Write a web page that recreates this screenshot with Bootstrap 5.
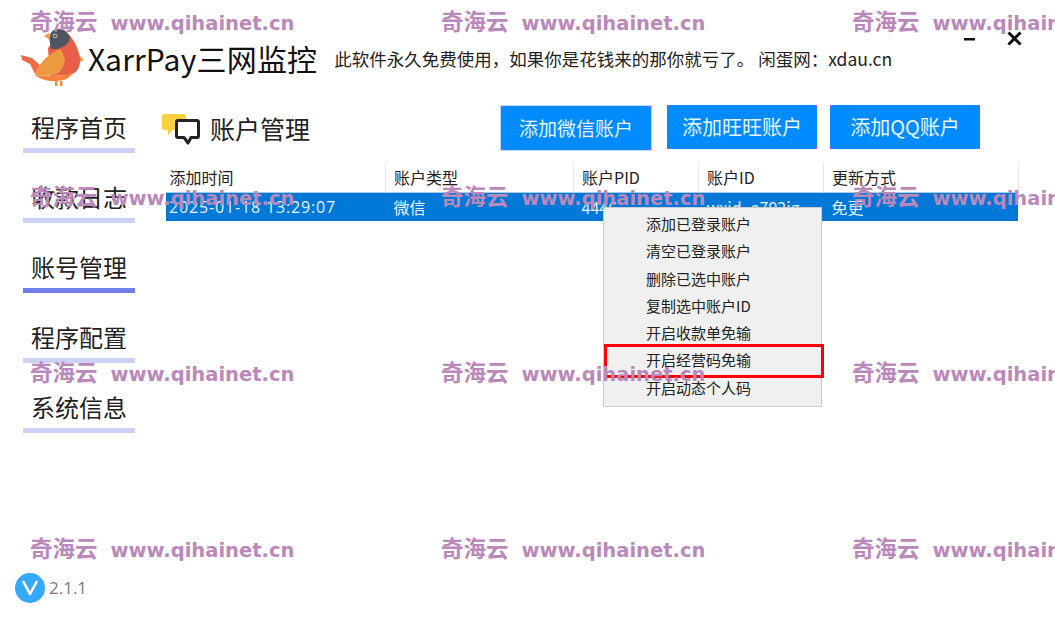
<!DOCTYPE html>
<html lang="zh-CN">
<head>
  <meta charset="UTF-8">
  <title>XarrPay三网监控</title>
  <meta name="viewport" content="width=device-width, initial-scale=1.0">
  <link href="https://cdn.jsdelivr.net/npm/bootstrap@5.3.0/dist/css/bootstrap.min.css" rel="stylesheet">
  <style>
    body {
      background-color: #fff;
      color: #222;
      font-family: "Noto Sans CJK SC", "Noto Sans", sans-serif;
      height: 630px;
      overflow: hidden;
    }
    .app-shell {
      height: 630px;
    }
    .app-head {
      height: 88px;
      padding-top: 28px;
      padding-left: 20px;
    }
    .app-title {
      font-size: 30px;
      line-height: 60px;
      letter-spacing: 0.2px;
      margin-left: 3px;
      color: #111;
    }
    .app-note {
      font-size: 17.5px;
      line-height: 62px;
      margin-left: 17px;
      color: #222;
    }
    .win-btns {
      position: absolute;
      top: 31px;
      right: 33px;
      gap: 31px;
    }
    .side-nav {
      width: 112px;
      margin-left: 23px;
      margin-top: 18px;
    }
    .side-item {
      display: block;
      height: 47px;
      margin-bottom: 23px;
      font-size: 24px;
      line-height: 42px;
      text-align: center;
      color: #222;
      text-decoration: none;
      border-bottom: 5px solid #ccd1f6;
    }
    .side-item.on {
      border-bottom-color: #6f7ee8;
    }
    .main-pane {
      width: 883px;
      margin-left: 30px;
    }
    .pane-head {
      height: 74px;
    }
    .pane-icon {
      margin-left: -3px;
      margin-top: 24px;
    }
    .pane-title {
      font-size: 25px;
      line-height: 46px;
      margin-left: 10px;
      margin-top: 17px;
    }
    .btn-bar {
      margin-right: 68px;
    }
    .add-btn {
      width: 150px;
      height: 44px;
      padding: 0;
      border: 0;
      border-radius: 0;
      font-size: 19px;
      color: #e8f4ff;
      background:
        radial-gradient(circle at 0 0, #ff2bd0 1.5px, transparent 2px),
        radial-gradient(circle at 100% 0, #ff2bd0 1.5px, transparent 2px),
        radial-gradient(circle at 0 100%, #ff2bd0 1.5px, transparent 2px),
        radial-gradient(circle at 100% 100%, #ff2bd0 1.5px, transparent 2px),
        #008cff;
    }
    .btn-low {
      margin-top: 18px;
      box-shadow: 0 0 0 1px #b5dbff;
    }
    .btn-up {
      margin-top: 17px;
      margin-left: 16px;
      font-size: 20px;
    }
    .btn-up.tight {
      margin-left: 13px;
    }
    .acct-table {
      width: 853px;
      table-layout: fixed;
      margin-bottom: 0;
      font-size: 16px;
    }
    .acct-table th, .acct-table td {
      padding: 0 0 0 8px;
      white-space: nowrap;
      overflow: hidden;
      font-weight: 400;
      border: 0;
    }
    .acct-table th {
      height: 30px;
      line-height: 29px;
      color: #222;
      border-right: 1px solid #e6e6e6;
    }
    .acct-table th:first-child {
      padding-left: 4px;
    }
    .acct-table td {
      height: 29px;
      line-height: 28px;
      --bs-table-bg: #0078d7;
      color: #e6f2fc;
      border-top: 1px solid #a8cdec;
    }
    .acct-table td:first-child {
      padding-left: 3px;
      border-left: 1px solid #fff;
    }
    .acct-table td:last-child {
      border-right: 1px solid #fff;
    }
    .date-cell {
      font-family: "Open Sans", "Noto Sans CJK SC", sans-serif;
      letter-spacing: 0.85px;
    }
    .ver-row {
      position: absolute;
      left: 15px;
      top: 573px;
    }
    .ver-badge {
      width: 30px;
      height: 30px;
      background-color: #35a9fb;
    }
    .ver-text {
      font-size: 17px;
      color: #7a7a7a;
      margin-left: 4px;
      font-family: "Open Sans", sans-serif;
    }
    .ctx-menu {
      position: absolute;
      left: 603px;
      top: 207px;
      width: 219px;
      height: 200px;
      padding: 2px 0 0;
      background-color: #f0f0f0;
      border: 1px solid #ccc;
      border-radius: 0;
      font-size: 15px;
      color: #222;
    }
    .ctx-item {
      height: 27.3px;
      line-height: 27px;
      padding-left: 42px;
    }
    .ctx-mark {
      position: absolute;
      left: 604px;
      top: 344px;
      width: 220px;
      height: 34px;
      border: 3px solid #f00;
    }
    .wm-layer {
      position: absolute;
      left: 0;
      top: 0;
      width: 1055px;
      height: 630px;
      pointer-events: none;
      overflow: hidden;
    }
    .wm-text {
      position: absolute;
      white-space: nowrap;
      color: #bb88bb;
      font-size: 22.5px;
      line-height: 24px;
      font-weight: 700;
    }
    .wm-text span {
      font-family: "DejaVu Sans", sans-serif;
      font-size: 19.5px;
      margin-left: 13px;
    }
  </style>
</head>
<body>
  <div class="app-shell position-relative">

    <!-- Header -->
    <div class="app-head d-flex align-items-start">
      <svg width="65" height="60" viewBox="0 0 65 60">
        <path d="M1 27 L12 30 L20 37 L15 46 L10 36 L2 32 Z" fill="#ee6a4a"/>
        <path d="M24 8 L29 5 L30 12 Z" fill="#f39a3e"/>
        <path d="M58 26 L64 32 L58 35 Z" fill="#ee9b3d"/>
        <path d="M43 1 C52 8 58 18 60 30 C61 40 56 45 50 47 L30 48 L28 20 Z" fill="#e75f49"/>
        <path d="M30 7 C31 3 35 1 39 1 C44 1 48 5 50 9 C50 13 48 15 46 17 C42 19 40 21 36 21 L31 21 C30 16 29 12 30 7 Z" fill="#4f5462"/>
        <path d="M15 47 C30 49 44 48 53 45 C50 50 44 53 35 53 C26 53 20 51 15 47 Z" fill="#f8823c"/>
        <path d="M15 47 C18 38 24 28 40 21 C44 26 46 32 44 36 C42 41 40 44 37 46 C30 48 22 48 15 47 Z" fill="#ec9a40"/>
        <path d="M35 53 h2.5 v5 h-2.5 Z M40 53 h2.5 v5 h-2.5 Z" fill="#f2883c"/>
        <circle cx="35" cy="8" r="2.4" fill="#a9a4a4"/>
        <circle cx="35" cy="8" r="1.1" fill="#444"/>
      </svg>
      <div class="app-title">XarrPay三网监控</div>
      <div class="app-note">此软件永久免费使用，如果你是花钱来的那你就亏了。 闲蛋网：xdau.cn</div>
    </div>
    <div class="win-btns d-flex align-items-center">
      <svg width="12" height="14" viewBox="0 0 12 14"><rect x="0" y="6" width="11" height="2.5" fill="#111"/></svg>
      <svg width="15" height="15" viewBox="0 0 15 15"><path d="M1.5 1.5 L13.5 13.5 M13.5 1.5 L1.5 13.5" stroke="#111" stroke-width="3"/></svg>
    </div>

    <div class="d-flex">
      <!-- Sidebar -->
      <nav class="side-nav flex-shrink-0">
        <a class="side-item" href="#">程序首页</a>
        <a class="side-item" href="#">收款日志</a>
        <a class="side-item on" href="#">账号管理</a>
        <a class="side-item" href="#">程序配置</a>
        <a class="side-item" href="#">系统信息</a>
      </nav>

      <!-- Main -->
      <main class="main-pane">
        <div class="pane-head d-flex align-items-start">
          <svg class="pane-icon" width="38" height="34" viewBox="0 0 38 34">
            <path d="M2 2 H22 Q24 2 24 4 V16 Q24 18 22 18 H11 L6 23 V18 H2 Q0 18 0 16 V4 Q0 2 2 2 Z" fill="#fdd13f"/>
            <path d="M16 8.5 H35 Q36.5 8.5 36.5 10 V24 Q36.5 25.5 35 25.5 H29 L26 31 L22 25.5 H16 Q14.5 25.5 14.5 24 V10 Q14.5 8.5 16 8.5 Z" fill="#fff" stroke="#222" stroke-width="3" stroke-linejoin="round"/>
          </svg>
          <div class="pane-title">账户管理</div>
          <div class="btn-bar d-flex ms-auto">
            <button class="btn add-btn btn-low" type="button">添加微信账户</button>
            <button class="btn add-btn btn-up" type="button">添加旺旺账户</button>
            <button class="btn add-btn btn-up tight" type="button">添加QQ账户</button>
          </div>
        </div>
        <table class="table acct-table">
          <colgroup>
            <col style="width:220px"><col style="width:188px"><col style="width:125px"><col style="width:125px"><col style="width:195px">
          </colgroup>
          <thead>
            <tr><th>添加时间</th><th>账户类型</th><th>账户PID</th><th>账户ID</th><th>更新方式</th></tr>
          </thead>
          <tbody>
            <tr><td class="date-cell">2025-01-18 13:29:07</td><td>微信</td><td>4446</td><td>wxid_a792ig</td><td>免更</td></tr>
          </tbody>
        </table>
      </main>
    </div>

    <!-- Version -->
    <div class="ver-row d-flex align-items-center">
      <div class="ver-badge rounded-circle d-flex align-items-center justify-content-center">
        <svg width="18" height="16" viewBox="0 0 18 16"><path d="M2.5 2 L9 14 L15.5 2" fill="none" stroke="#fff" stroke-width="2.6" stroke-linecap="round" stroke-linejoin="round"/></svg>
      </div>
      <div class="ver-text">2.1.1</div>
    </div>

    <!-- Context menu -->
    <div class="ctx-menu">
      <div class="ctx-item">添加已登录账户</div>
      <div class="ctx-item">清空已登录账户</div>
      <div class="ctx-item">删除已选中账户</div>
      <div class="ctx-item">复制选中账户ID</div>
      <div class="ctx-item">开启收款单免输</div>
      <div class="ctx-item">开启经营码免输</div>
      <div class="ctx-item">开启动态个人码</div>
    </div>
    <div class="ctx-mark"></div>

    <!-- Watermark -->
    <div class="wm-layer">
      <div class="wm-text" style="left:30px;top:8px">奇海云<span>www.qihainet.cn</span></div>
      <div class="wm-text" style="left:441px;top:8px">奇海云<span>www.qihainet.cn</span></div>
      <div class="wm-text" style="left:852px;top:8px">奇海云<span>www.qihainet.cn</span></div>
      <div class="wm-text" style="left:30px;top:183px">奇海云<span>www.qihainet.cn</span></div>
      <div class="wm-text" style="left:441px;top:183px">奇海云<span>www.qihainet.cn</span></div>
      <div class="wm-text" style="left:852px;top:183px">奇海云<span>www.qihainet.cn</span></div>
      <div class="wm-text" style="left:30px;top:359px">奇海云<span>www.qihainet.cn</span></div>
      <div class="wm-text" style="left:441px;top:359px">奇海云<span>www.qihainet.cn</span></div>
      <div class="wm-text" style="left:852px;top:359px">奇海云<span>www.qihainet.cn</span></div>
      <div class="wm-text" style="left:30px;top:535px">奇海云<span>www.qihainet.cn</span></div>
      <div class="wm-text" style="left:441px;top:535px">奇海云<span>www.qihainet.cn</span></div>
      <div class="wm-text" style="left:852px;top:535px">奇海云<span>www.qihainet.cn</span></div>
    </div>
  </div>
  <script src="https://cdn.jsdelivr.net/npm/bootstrap@5.3.0/dist/js/bootstrap.bundle.min.js"></script>
</body>
</html>
